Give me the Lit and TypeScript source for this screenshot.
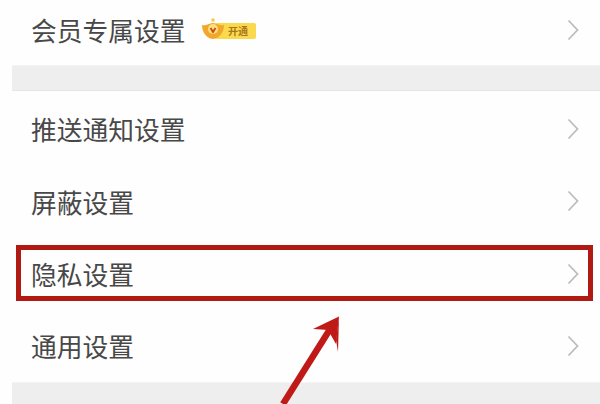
import { LitElement, html, css } from "lit";
import { customElement } from "lit/decorators.js";

const chevron = html`<svg class="chev" viewBox="0 0 12 22" width="12" height="22"><path d="M1.5 1.5 L10.5 11 L1.5 20.5" fill="none" stroke="#bdbdbd" stroke-width="1.8"/></svg>`;

@customElement("app-root")
export class AppRoot extends LitElement {
  static styles = css`
    :host {
      display: block;
      position: relative;
      width: 600px;
      height: 404px;
      overflow: hidden;
      background: #fefefe;
      font-family: "Noto Sans CJK SC", "Liberation Sans", sans-serif;
      color: #484848;
    }
    .list {
      display: flex;
      flex-direction: column;
      padding-left: 12px;
    }
    .row {
      display: flex;
      align-items: center;
      height: 72.25px;
      padding: 0 21px 0 19px;
      font-size: 25.75px;
      line-height: 1;
    }
    .first { height: 59px; margin-bottom: 6px; }
    .label { flex: none; }
    .spacer { flex: 1; }
    .gap {
      background: #eeeeee;
      border-top: 1px solid #f4f4f4;
      border-bottom: 1px solid #e6e6e6;
      box-sizing: border-box;
    }
    .gap.a { height: 26px; margin-bottom: 2px; }
    .gap.b { height: 24px; }
    .badge {
      display: flex;
      align-items: center;
      margin-left: 15px;
      position: relative;
      width: 55px;
      height: 20px;
    }
    .pill {
      position: absolute;
      left: 14px;
      top: 3px;
      width: 41px;
      height: 16px;
      border-radius: 2px;
      background: #fbd94f;
      color: #a9761a;
      font-size: 10px;
      line-height: 16px;
      text-align: center;
      font-weight: 700;
      padding-left: 6px;
      box-sizing: border-box;
    }
    .crown { position: absolute; left: 0; top: -3px; }
    .chev { flex: none; }
    .mark {
      position: absolute;
      left: 15.5px;
      top: 244.5px;
      width: 577px;
      height: 56.5px;
      box-sizing: border-box;
      border: 5.5px solid #b11a13;
    }
    .arrow { position: absolute; left: 260px; top: 300px; }
  `;

  render() {
    return html`
      <div class="list">
        <div class="row first">
          <span class="label">会员专属设置</span>
          <span class="badge">
            <span class="pill">开通</span>
            <svg class="crown" width="24" height="24" viewBox="0 0 24 24">
              <path d="M1 8 C5 9 6 7 12 6 C18 7 19 9 23 8 C23 15 19 21 12 22 C5 21 1 15 1 8Z" fill="#f2a72c"/>
              <circle cx="12" cy="3" r="1.8" fill="#f5c65a"/>
              <circle cx="12" cy="12" r="5" fill="#fbe27a"/>
              <path d="M9.5 11 L12 15 L14.5 11" fill="none" stroke="#c9471f" stroke-width="1.8"/>
            </svg>
          </span>
          <span class="spacer"></span>
          ${chevron}
        </div>
        <div class="gap a"></div>
        <div class="row"><span class="label">推送通知设置</span><span class="spacer"></span>${chevron}</div>
        <div class="row"><span class="label">屏蔽设置</span><span class="spacer"></span>${chevron}</div>
        <div class="row"><span class="label">隐私设置</span><span class="spacer"></span>${chevron}</div>
        <div class="row"><span class="label">通用设置</span><span class="spacer"></span>${chevron}</div>
        <div class="gap b"></div>
      </div>
      <div class="mark"></div>
      <svg class="arrow" width="100" height="104" viewBox="0 0 100 104">
        <path d="M23 104 L72 26" stroke="#c01a18" stroke-width="6.5" fill="none"/>
        <path d="M79 16.5 L53 29 L68 30 L76 44 Z" fill="#c01a18"/>
        <path d="M79 16.5 L78 52 L76 40 Z" fill="#c01a18"/>
      </svg>
    `;
  }
}
